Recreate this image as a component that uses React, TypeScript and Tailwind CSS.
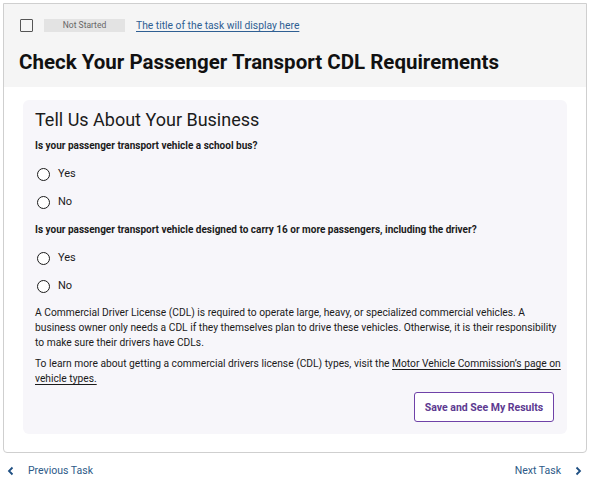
const font = { fontFamily: "Roboto, 'Noto Sans', sans-serif" };

function Radio({ label }: { label: string }) {
  return (
    <label className="flex h-[28px] items-center gap-[8px] text-[11px] text-[#1b1b1b]">
      <span className="ml-[2px] h-[13px] w-[13px] rounded-full border border-[#1b1b1b] bg-white" />
      {label}
    </label>
  );
}

function Chevron({ dir }: { dir: "left" | "right" }) {
  return (
    <svg width="8" height="10" viewBox="0 0 8 10" fill="none">
      <path
        d={dir === "left" ? "M5.5 1.5 2 5l3.5 3.5" : "M2.5 1.5 6 5 2.5 8.5"}
        stroke="#1f4f82"
        strokeWidth="1.8"
      />
    </svg>
  );
}

export default function App() {
  return (
    <div className="h-[484px] w-[590px] bg-white" style={font}>
      <div className="ml-[3px] mt-[3px] w-[584px] rounded-b-[4px] border border-[#cfcfcf]">
        {/* encabezado de la tarea */}
        <div className="bg-[#f5f5f5] px-[15px] pb-[12px] pt-[14px]">
          <div className="flex items-center">
            <span className="ml-[1px] h-[13px] w-[13px] rounded-[1px] border-[1.5px] border-[#555]" />
            <span className="ml-[11px] flex h-[13px] w-[81px] items-center justify-center bg-[#e3e3e3] text-[8.5px] text-[#666]">
              Not Started
            </span>
            <a className="ml-[11px] text-[10.3px] text-[#2f5f93] underline underline-offset-2">
              The title of the task will display here
            </a>
          </div>
          <h1 className="mt-[16px] text-[20.5px] font-bold leading-[26px] text-[#111]">
            Check Your Passenger Transport CDL Requirements
          </h1>
        </div>

        <div className="px-[19px] pb-[18px] pt-[13px]">
          <div className="rounded-[6px] bg-[#f7f6fa] px-[12px] pb-[12px] pt-[7px]">
            <h2 className="text-[18px] leading-[26px] text-[#1b1b1b]">Tell Us About Your Business</h2>
            <p className="mt-[6px] text-[10px] font-bold leading-[14px] text-[#1b1b1b]">
              Is your passenger transport vehicle a school bus?
            </p>
            <div className="mt-[7px]">
              <Radio label="Yes" />
              <Radio label="No" />
            </div>
            <p className="mt-[7px] text-[10px] font-bold leading-[14px] text-[#1b1b1b]">
              Is your passenger transport vehicle designed to carry 16 or more passengers, including the driver?
            </p>
            <div className="mt-[7px]">
              <Radio label="Yes" />
              <Radio label="No" />
            </div>
            <p className="mt-[5px] whitespace-nowrap text-[10.25px] leading-[15px] text-[#1b1b1b]">
              A Commercial Driver License (CDL) is required to operate large, heavy, or specialized commercial vehicles. A
              <br />
              business owner only needs a CDL if they themselves plan to drive these vehicles. Otherwise, it is their
              responsibility
              <br />
              to make sure their drivers have CDLs.
            </p>
            <p className="mt-[6px] whitespace-nowrap text-[10.25px] leading-[15px] text-[#1b1b1b]">
              To learn more about getting a commercial drivers license (CDL) types, visit the{" "}
              <a className="underline underline-offset-2">
                Motor Vehicle Commission’s page on
                <br />
                vehicle types.
              </a>
            </p>
            <div className="mt-[6px] flex justify-end pr-[1px]">
              <button className="h-[30px] w-[140px] rounded-[3px] border-[1.5px] border-[#6f42a8] bg-white text-[10.5px] font-bold text-[#5d3a91]">
                Save and See My Results
              </button>
            </div>
          </div>
        </div>
      </div>

      {/* navegación */}
      <div className="mt-[10px] flex items-center justify-between pl-[7px] pr-[8px] text-[10.5px] text-[#2d5a88]">
        <a className="flex items-center gap-[13px]">
          <Chevron dir="left" />
          Previous Task
        </a>
        <a className="flex items-center gap-[13px]">
          Next Task
          <Chevron dir="right" />
        </a>
      </div>
    </div>
  );
}
